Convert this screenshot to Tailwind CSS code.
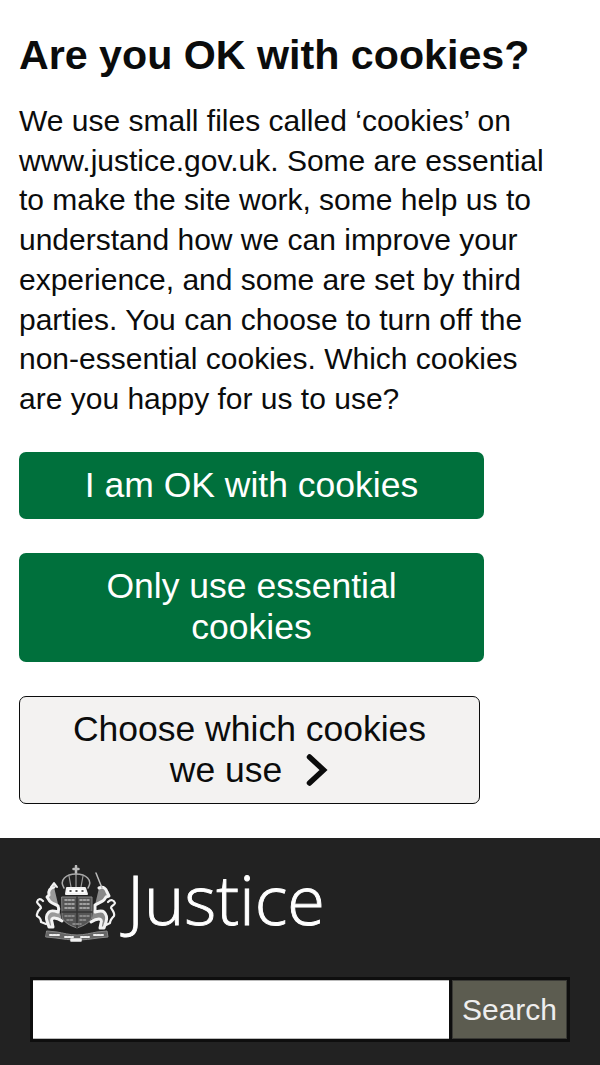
<!DOCTYPE html>
<html lang="en"><head><meta charset="utf-8"><script src="https://cdn.jsdelivr.net/npm/@tailwindcss/browser@4"></script><title>Justice</title></head>
<body class="bg-white font-['Liberation_Sans',Arial,sans-serif] w-[600px] h-[1065px] overflow-hidden">
<section class="pt-[32px] px-[19px] pb-[34px] h-[838px]">
<h2 class="text-[41.200px] leading-[46px] font-bold text-[#0b0c0c]">Are you OK with cookies?</h2>
<p class="mt-[23px] text-[30px] leading-[39.7px] text-[#0b0c0c] w-[530px]">We use small files called ‘cookies’ on www.justice.gov.uk. Some are essential to make the site work, some help us to understand how we can improve your experience, and some are set by third parties. You can choose to turn off the non-essential cookies. Which cookies are you happy for us to use?</p>
<div class="mt-[33px] flex flex-col items-start">
<a class="flex items-center justify-center w-[465px] h-[67px] bg-[#00703c] rounded-[7px] text-white text-[35.500px] leading-[41px] text-center">I am OK with cookies</a>
<a class="mt-[34px] flex items-center justify-center w-[465px] h-[109px] bg-[#00703c] rounded-[7px] text-white text-[35.500px] leading-[41px] text-center px-[60px]">Only use essential cookies</a>
<a class="mt-[34px] flex flex-col items-center justify-center w-[461px] h-[108px] bg-[#f3f2f1] border border-[#0b0c0c] rounded-[7px] text-[#0b0c0c] text-[35.500px] leading-[41px]">
<span>Choose which cookies</span>
<span class="flex items-center">we use
<svg class="ml-[23px]" width="24" height="34" viewBox="0 0 24 34" fill="none"><path d="M4.500 4 L18.500 17 L4.500 30" stroke="#0b0c0c" stroke-width="5.500" stroke-linecap="round" stroke-linejoin="miter"/></svg></span>
</a>
</div>
</section>
<footer class="bg-[#222222] h-[227px] pt-[25px] pl-[30px]">
<div class="flex items-start h-[114px] pl-[5px]">
<svg class="mt-[2px] blur-[0.5px] shrink-0" width="85" height="78" viewBox="0 0 85 78" fill="none">
<g stroke="#f2f2f2" stroke-linecap="round" stroke-linejoin="round">
<path d="M41 1v8M38.500 4h5" stroke-width="2.500" stroke="#bbb"/>
<path d="M29 23c-5-8 2-14 12-14s17 6 12 14" stroke-width="1.500" stroke="#aaa"/>
<path d="M41 9v13M34 11l2 11M48 11l-2 11" stroke-width="1.200" stroke="#999"/>
<path d="M32 23h18l2 6H31z" stroke-width="2" fill="#fff"/>
<path d="M35 26h1M41 26h1M47 26h1" stroke-width="1.500" stroke="#222"/>
<path d="M27 32h30v19c0 6-9 10-15 12-6-2-15-6-15-12z" stroke-width="1" stroke="#888" fill="#555"/>
<path d="M42 32v31M27 47h30" stroke-width="1.500" stroke="#333"/>
<path d="M30 35h9M30 39h9M30 43h9M45 35h9M45 39h9M45 43h9" stroke-width="1.500" stroke="#bbb" stroke-dasharray="2 1.500"/>
<path d="M30 51h9M45 51h9M32 55h7M45 55h7M38 59h8" stroke-width="1.500" stroke="#999" stroke-dasharray="2 1.500"/>
<path d="M19 22c-4 1-6 4-5 8l-2 2 2 3c1 3 6 4 9 6 1 2 1 4 0 6-3-1-7-2-9 0-3 3-3 7-2 9l2 6h4l-1-5c-1-2 0-4 2-4 3 0 5 1 8 3" stroke-width="3" fill="#999"/>
<path d="M16 22l3-4 3 4" stroke-width="2" fill="#ccc"/>
<path d="M8 36c-3-3-5-2-6 1 1 3 4 3 4 6-2 2-5 4-4 8 2 1 4 3 4 6l5 2" stroke-width="2.200"/>
<path d="M64 23c5-2 7 1 8 4l2 4-3 1-2 3c-2 2-6 3-9 5 0 2 0 5 0 7 4-1 7-2 9 0 3 3 3 7 2 10l-2 6h-4l1-5c1-2 0-4-2-4-3 0-5 1-8 3" stroke-width="3" fill="#888"/>
<path d="M67 23l-6-15" stroke-width="1.500" stroke="#bbb"/>
<path d="M73 37c3-3 6-2 7 1-1 3-4 2-4 5 2 3 4 5 3 8-2 2-4 4-4 7l-4 2" stroke-width="2.200"/>
<path d="M12 66l10 1c6 1 13 3 20 3s14-2 20-3l10-1 1 6-10 1c-7 1-14 2-21 2s-14-1-21-2l-10-1z" stroke-width="1" stroke="#888" fill="#666"/>
<path d="M15 70h10M30 72h8M46 72h8M59 70h10" stroke-width="2" stroke="#eee" stroke-dasharray="2 1.500"/>
<path d="M36 74h10v2H36z" stroke-width="1.500" fill="#eee"/>
</g></svg>
<span class="ml-[7px] -mt-[3px] font-['Open_Sans',sans-serif] font-light [-webkit-text-stroke:0.9px_#ffffff] text-white text-[68.500px] leading-[78px]">Justice</span>
</div>
<form class="flex w-[540px] h-[65px] bg-[#0e0e0e] p-[3px] gap-[3px]">
<div class="w-[416px] bg-white border-y border-[#bbb]"></div>
<button type="button" class="w-[115px] bg-[#5c5c50] border border-[#3a3a36] text-[#eeeeee] text-[30px] leading-[58px] text-center">Search</button>
</form>
</footer>
</body></html>
